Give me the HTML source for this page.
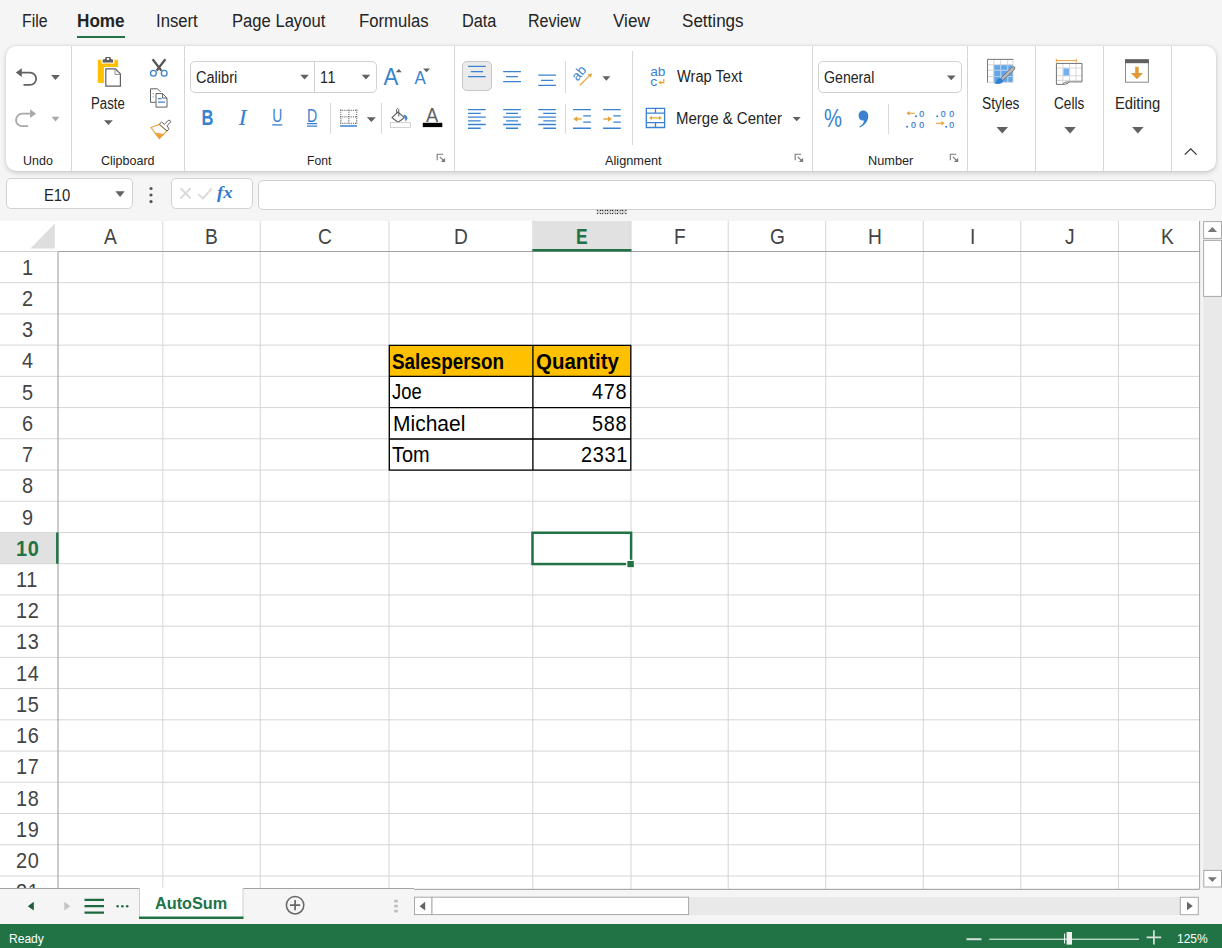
<!DOCTYPE html>
<html><head><meta charset="utf-8"><title>Spreadsheet</title>
<style>
html,body{margin:0;padding:0}
body{width:1222px;height:948px;position:relative;overflow:hidden;background:#f5f5f5;font-family:"Liberation Sans",sans-serif;color:#242424}
.t{position:absolute;white-space:nowrap;line-height:1}
.a{position:absolute}
svg{position:absolute;overflow:visible}
.ribbon{left:6px;top:46px;width:1210px;height:125px;background:#fff;border-radius:10px;box-shadow:0 1.5px 5px rgba(0,0,0,.17),0 0 2px rgba(0,0,0,.09)}
.vd{position:absolute;width:1px;background:#d6d6d6}
.box{position:absolute;background:#fff;border:1px solid #d1d1d1;border-radius:5px;box-sizing:border-box}
</style></head>
<body>
<span class="t" style="left:21.60px;top:12px;font-size:18px;transform:scaleX(0.8793);transform-origin:0 0;">File</span>
<span class="t" style="left:77.40px;top:12px;font-size:18px;transform:scaleX(0.9520);transform-origin:0 0;font-weight:700;">Home</span>
<span class="t" style="left:156.30px;top:12px;font-size:18px;transform:scaleX(0.9267);transform-origin:0 0;">Insert</span>
<span class="t" style="left:231.80px;top:12px;font-size:18px;transform:scaleX(0.9226);transform-origin:0 0;">Page Layout</span>
<span class="t" style="left:358.70px;top:12px;font-size:18px;transform:scaleX(0.9280);transform-origin:0 0;">Formulas</span>
<span class="t" style="left:461.70px;top:12px;font-size:18px;transform:scaleX(0.9049);transform-origin:0 0;">Data</span>
<span class="t" style="left:528.30px;top:12px;font-size:18px;transform:scaleX(0.8913);transform-origin:0 0;">Review</span>
<span class="t" style="left:613.40px;top:12px;font-size:18px;transform:scaleX(0.9518);transform-origin:0 0;">View</span>
<span class="t" style="left:682.30px;top:12px;font-size:18px;transform:scaleX(0.9477);transform-origin:0 0;">Settings</span>
<div class="a" style="left:77px;top:36px;width:48px;height:2px;background:#217346"></div>
<div class="a ribbon"></div>
<div class="vd" style="left:71px;top:46px;height:125px"></div>
<div class="vd" style="left:184px;top:46px;height:125px"></div>
<div class="vd" style="left:454px;top:46px;height:125px"></div>
<div class="vd" style="left:812px;top:46px;height:125px"></div>
<div class="vd" style="left:967px;top:46px;height:125px"></div>
<div class="vd" style="left:1035px;top:46px;height:125px"></div>
<div class="vd" style="left:1103px;top:46px;height:125px"></div>
<div class="vd" style="left:1171px;top:46px;height:125px"></div>
<div class="vd" style="left:330px;top:103px;height:31px;background:#d9d9d9"></div>
<div class="vd" style="left:381px;top:103px;height:31px;background:#d9d9d9"></div>
<div class="vd" style="left:565px;top:61px;height:32px;background:#d9d9d9"></div>
<div class="vd" style="left:565px;top:104px;height:30px;background:#d9d9d9"></div>
<div class="vd" style="left:632px;top:51px;height:94px;background:#d9d9d9"></div>
<div class="vd" style="left:888px;top:104px;height:30px;background:#d9d9d9"></div>
<div class="box" style="left:190px;top:61px;width:187px;height:32px"></div>
<div class="vd" style="left:314px;top:62px;height:30px;background:#d1d1d1"></div>
<div class="box" style="left:818px;top:61px;width:144px;height:32px"></div>
<div class="box" style="left:462px;top:61px;width:30px;height:30px;background:#ebebeb;border-color:#c6c6c6"></div>
<span class="t" style="left:23.40px;top:154px;font-size:13.5px;transform:scaleX(0.9240);transform-origin:0 0;">Undo</span>
<span class="t" style="left:100.70px;top:154px;font-size:13.5px;transform:scaleX(0.9264);transform-origin:0 0;">Clipboard</span>
<span class="t" style="left:307.40px;top:154px;font-size:13.5px;transform:scaleX(0.9000);transform-origin:0 0;">Font</span>
<span class="t" style="left:605.40px;top:154px;font-size:13.5px;transform:scaleX(0.9433);transform-origin:0 0;">Alignment</span>
<span class="t" style="left:867.60px;top:154px;font-size:13.5px;transform:scaleX(0.9437);transform-origin:0 0;">Number</span>
<span class="t" style="left:90.70px;top:96px;font-size:15.6px;transform:scaleX(0.8464);transform-origin:0 0;">Paste</span>
<span class="t" style="left:195.60px;top:70px;font-size:15.6px;transform:scaleX(0.9326);transform-origin:0 0;">Calibri</span>
<span class="t" style="left:320.40px;top:70px;font-size:15.6px;letter-spacing:0.600px;transform:scaleX(0.9200);transform-origin:0 0;">11</span>
<span class="t" style="left:677.00px;top:69px;font-size:15.6px;transform:scaleX(0.9377);transform-origin:0 0;">Wrap Text</span>
<span class="t" style="left:675.80px;top:111px;font-size:15.6px;transform:scaleX(0.9621);transform-origin:0 0;">Merge &amp; Center</span>
<span class="t" style="left:824.20px;top:70px;font-size:15.6px;transform:scaleX(0.9075);transform-origin:0 0;">General</span>
<span class="t" style="left:982.30px;top:96px;font-size:15.6px;transform:scaleX(0.8814);transform-origin:0 0;">Styles</span>
<span class="t" style="left:1054.20px;top:96px;font-size:15.6px;transform:scaleX(0.8733);transform-origin:0 0;">Cells</span>
<span class="t" style="left:1114.50px;top:96px;font-size:15.6px;transform:scaleX(0.9481);transform-origin:0 0;">Editing</span>
<svg width="1222" height="180" viewBox="0 0 1222 180" style="left:0;top:0">
<path d="M21.3 72.6H30A6.15 6.15 0 0 1 30 84.9H23.5" fill="none" stroke="#616161" stroke-width="1.8"/><path d="M15.8 72.6L21.8 68.2V77Z" fill="#616161"/>
<path d="M51.1 75.1H59.9L55.5 80Z" fill="#616161"/>
<path d="M30.6 113.7H22.2A6.2 6.2 0 0 0 22.2 126.1H28.2" fill="none" stroke="#a8a8a8" stroke-width="1.8"/><path d="M36.1 113.7L30.1 109.3V118.1Z" fill="#a8a8a8"/>
<path d="M51.6 116.7H59.4L55.5 121.6Z" fill="#a8a8a8"/>
<path d="M98.6 59.8H117.3Q118.1 59.8 118.1 60.6V66.9H103.9V83H98.6Q97.8 83 97.8 82.2V60.6Q97.8 59.8 98.6 59.8Z" fill="#ffc000"/>
<path d="M101.4 59.6H114.4V62.4Q114.4 63.6 113.2 63.6H102.6Q101.4 63.6 101.4 62.4Z" fill="#fff"/>
<path d="M102.7 62.5V60.6Q102.7 59.3 104 59.3H105.2V58.3Q105.2 57.1 106.4 57.1H109.7Q110.9 57.1 110.9 58.3V59.3H112Q113.1 59.3 113.1 60.6V62.5Z" fill="#5e5e5e"/><rect x="106.9" y="58.1" width="2.2" height="1.8" rx="0.4" fill="#fff"/>
<path d="M105.8 68.8H115.2L120.4 73.9V86.2H105.8Z" fill="#fff" stroke="#5e5e5e" stroke-width="1.2" stroke-linejoin="round"/><path d="M115 69V74.4H120.4" fill="none" stroke="#8a8f8c" stroke-width="1"/>
<path d="M104 120.2H112.8L108.4 125Z" fill="#616161"/>
<path d="M152.6 59.2L161.4 70.6M165.4 59.2L156.6 70.6" stroke="#555" stroke-width="2.3" fill="none"/>
<circle cx="153.4" cy="73.3" r="2.9" fill="none" stroke="#3a82cf" stroke-width="1.3"/><circle cx="164.2" cy="73.3" r="2.9" fill="none" stroke="#3a82cf" stroke-width="1.3"/>
<path d="M155.5 102.3H150.5V88.8H157.5L160.5 91.8" fill="none" stroke="#616161" stroke-width="1"/>
<path d="M156 93.6H162.6L167 98V107.1H156Z" fill="#fff" stroke="#616161" stroke-width="1"/><path d="M162.6 93.6V98H167" fill="none" stroke="#616161" stroke-width="1"/>
<path d="M158 98.6H161.6M158 102.1H165" stroke="#3a82cf" stroke-width="1.1"/><path d="M152.6 93.5h1M152.6 97h1" stroke="#3a82cf" stroke-width="1.1"/>
<path d="M151 127.6L159.2 124.4L167 131L159.3 138.7Z" fill="#fff" stroke="#e8a33a" stroke-width="1.1"/><path d="M154.5 132.5L164 134L159.3 138.7Z" fill="#e8a33a"/>
<path d="M159.4 124.2L161.6 122L164.4 124.4L168.2 120.4Q170.4 119.6 170.8 121.8L167 125.8L169 128.8L167 131Z" fill="#fff" stroke="#616161" stroke-width="1"/>
<path d="M300.3 74.8H308.8L304.55 79.4Z" fill="#616161"/>
<path d="M361.7 74.8H370.2L365.95 79.4Z" fill="#616161"/>
<text x="383.4" y="84.8" font-family="'Liberation Sans',sans-serif" font-size="24" fill="#3a82cf" textLength="14.80" lengthAdjust="spacingAndGlyphs" >A</text>
<path d="M395.8 72.3L398.8 69L401.8 72.3Z" fill="#616161"/>
<text x="414.6" y="83.7" font-family="'Liberation Sans',sans-serif" font-size="18.9" fill="#3a82cf" textLength="11.30" lengthAdjust="spacingAndGlyphs" >A</text>
<path d="M423.1 68.4H430L426.55 72.2Z" fill="#616161"/>
<text x="201.6" y="125" font-family="'Liberation Sans',sans-serif" font-size="22" fill="#3a82cf" font-weight="700" textLength="11.90" lengthAdjust="spacingAndGlyphs" >B</text>
<text x="238.6" y="125" font-family="'Liberation Serif',serif" font-size="22.5" fill="#3a82cf" font-style="italic" textLength="8.20" lengthAdjust="spacingAndGlyphs" >I</text>
<text x="272.2" y="122" font-family="'Liberation Sans',sans-serif" font-size="18" fill="#3a82cf" textLength="10.00" lengthAdjust="spacingAndGlyphs" >U</text>
<path d="M272.2 124.9H282.2" stroke="#3a82cf" stroke-width="1.3"/>
<text x="307" y="122" font-family="'Liberation Sans',sans-serif" font-size="18" fill="#3a82cf" textLength="10.20" lengthAdjust="spacingAndGlyphs" >D</text>
<path d="M307 123.6H317.2M307 126.2H317.2" stroke="#3a82cf" stroke-width="1.2"/>
<path d="M340 110.4H357.4M340 116.9H357.4M340 123.4H357.4M340.8 109.6V124.2M348.8 109.6V124.2M356.7 109.6V124.2" stroke="#777" stroke-width="1.3" stroke-dasharray="1.1 1.05" fill="none"/>
<path d="M340 126H357" stroke="#3a82cf" stroke-width="1.5"/>
<path d="M366.8 117.2H375.9L371.35 121.9Z" fill="#616161"/>
<path d="M392 117.7L397.9 112L404.3 117.7L398.1 122.3Z" fill="#fff" stroke="#616161" stroke-width="1.1" stroke-linejoin="round"/>
<path d="M396.6 113.2V109.6Q397.6 107.2 398.8 109.6V116.6" fill="none" stroke="#616161" stroke-width="1"/>
<path d="M403.2 114.7Q407.4 114.6 407.5 118.6L405.6 121.8Q405.3 117 403.2 114.7Z" fill="#3a82cf"/>
<rect x="390.5" y="122.6" width="20" height="4.9" fill="#fff" stroke="#cfcfcf" stroke-width="0.9"/>
<text x="426" y="122.1" font-family="'Liberation Sans',sans-serif" font-size="20.4" fill="#616161" textLength="12.20" lengthAdjust="spacingAndGlyphs" >A</text>
<rect x="422.8" y="122.8" width="19.5" height="4.3" fill="#000"/>
<path d="M437.2 160.2V154.2H443.2" fill="none" stroke="#7a7a7a" stroke-width="1.1"/><path d="M439.8 156.79999999999998L444.4 161.39999999999998" stroke="#7a7a7a" stroke-width="1.2"/><path d="M445.09999999999997 157.79999999999998V162.1H440.8Z" fill="#7a7a7a"/>
<path d="M795.2 160.2V154.2H801.2" fill="none" stroke="#7a7a7a" stroke-width="1.1"/><path d="M797.8000000000001 156.79999999999998L802.4000000000001 161.39999999999998" stroke="#7a7a7a" stroke-width="1.2"/><path d="M803.1 157.79999999999998V162.1H798.8000000000001Z" fill="#7a7a7a"/>
<path d="M950.3 160.2V154.2H956.3" fill="none" stroke="#7a7a7a" stroke-width="1.1"/><path d="M952.9 156.79999999999998L957.5 161.39999999999998" stroke="#7a7a7a" stroke-width="1.2"/><path d="M958.1999999999999 157.79999999999998V162.1H953.9Z" fill="#7a7a7a"/>
<path d="M468 66.4H485.7M470.8 71.6H482.9M468 76.6H485.7M503.2 71.6H520.9M506.0 76.6H518.1M503.2 81.6H520.9M538.3 75.1H556.0M541.0999999999999 80.3H553.1999999999999M538.3 85.4H556.0M468 109.6H485.7M503.2 109.6H520.9M538.3 109.6H555.9M468 113.35H480.7M506 113.35H518.1M543.3 113.35H555.9M468 117.05H485.7M503.2 117.05H520.9M538.3 117.05H555.9M468 120.8H480.7M506 120.8H518.1M543.3 120.8H555.9M468 124.5H485.7M503.2 124.5H520.9M538.3 124.5H555.9M468 128.2H480.7M506 128.2H518.1M543.3 128.2H555.9M573 109.6H590.9M573 128.2H590.9M583.2 115.8H590.9M583.2 122.1H590.9M603.1 109.6H620.8M603.1 128.2H620.8M613.4 115.8H620.8M613.4 122.1H620.8" stroke="#3a82cf" stroke-width="1.35" fill="none"/>
<path d="M575 119H581.8" stroke="#e8a33a" stroke-width="1.4"/><path d="M573.3 119L577.3 116.2V121.8Z" fill="#e8a33a"/>
<path d="M603.4 119H610" stroke="#e8a33a" stroke-width="1.4"/><path d="M611.9 119L607.9 116.2V121.8Z" fill="#e8a33a"/>
<text x="0" y="0" font-family="'Liberation Sans',sans-serif" font-size="13.4" fill="#3a82cf" transform="translate(577.4 81.8) rotate(-50)">ab</text>
<path d="M579.8 85.2L590.6 74.6" stroke="#e8a33a" stroke-width="1.2"/><path d="M592 73.2L587.6 74.4L590.8 77.6Z" fill="#e8a33a"/>
<path d="M602.4 76.2H610.3L606.3499999999999 80.8Z" fill="#616161"/>
<text x="650.2" y="75.9" font-family="'Liberation Sans',sans-serif" font-size="13.6" fill="#3a82cf" textLength="15.20" lengthAdjust="spacingAndGlyphs" >ab</text>
<text x="650.2" y="85.8" font-family="'Liberation Sans',sans-serif" font-size="13.6" fill="#3a82cf" textLength="7.00" lengthAdjust="spacingAndGlyphs" >c</text>
<path d="M663.8 78.9V82.6H660" fill="none" stroke="#e8a33a" stroke-width="1.2"/><path d="M658.2 82.6L661.2 80.4V84.8Z" fill="#e8a33a"/>
<path d="M646.3 108.4H664.6V127.5H646.3ZM646.3 113.1H664.6M646.3 122.7H664.6M655.5 108.4V113.1M655.5 122.7V127.5" fill="none" stroke="#3a82cf" stroke-width="1.3"/>
<path d="M651 117.9H660" stroke="#e8a33a" stroke-width="1.2"/><path d="M649 117.9L652 115.8V120Z M662 117.9L659 115.8V120Z" fill="#e8a33a"/>
<path d="M792.7 116.9H800.7L796.7 121.3Z" fill="#616161"/>
<path d="M947 75.5H955.5L951.25 80.2Z" fill="#616161"/>
<text x="824" y="127.4" font-family="'Liberation Sans',sans-serif" font-size="25" fill="#3a82cf" textLength="18.00" lengthAdjust="spacingAndGlyphs" >%</text>
<path d="M863.2 110.4C866.2 110.4 868.3 112.6 868.3 116C868.3 121 865 125.4 859.6 127.6L859.2 126.8C862 125.2 863.6 123.2 864 120.4C863.6 120.5 863.2 120.6 862.8 120.6C860.4 120.6 858.6 118.6 858.6 115.6C858.6 112.6 860.6 110.4 863.2 110.4Z" fill="#3a82cf"/>
<circle cx="916" cy="116.3" r="1.05" fill="#3a82cf"/><text x="919.3" y="117.2" font-family="'Liberation Sans',sans-serif" font-size="9.8" fill="#3a82cf" textLength="4.90" lengthAdjust="spacingAndGlyphs" stroke="#3a82cf" stroke-width="0.25">0</text><circle cx="907.1" cy="126.7" r="1.05" fill="#3a82cf"/><text x="910.9" y="127.6" font-family="'Liberation Sans',sans-serif" font-size="9.8" fill="#3a82cf" textLength="4.90" lengthAdjust="spacingAndGlyphs" stroke="#3a82cf" stroke-width="0.25">0</text><text x="919.3" y="127.6" font-family="'Liberation Sans',sans-serif" font-size="9.8" fill="#3a82cf" textLength="4.90" lengthAdjust="spacingAndGlyphs" stroke="#3a82cf" stroke-width="0.25">0</text>
<path d="M908.4 113.3H914.8" stroke="#e8a33a" stroke-width="1.1"/><path d="M906.4 113.3L909.6 111V115.6Z" fill="#e8a33a"/>
<circle cx="937.3" cy="116.3" r="1.05" fill="#3a82cf"/><text x="940.7" y="117.2" font-family="'Liberation Sans',sans-serif" font-size="9.8" fill="#3a82cf" textLength="4.90" lengthAdjust="spacingAndGlyphs" stroke="#3a82cf" stroke-width="0.25">0</text><text x="949.3" y="117.2" font-family="'Liberation Sans',sans-serif" font-size="9.8" fill="#3a82cf" textLength="4.90" lengthAdjust="spacingAndGlyphs" stroke="#3a82cf" stroke-width="0.25">0</text><circle cx="946.2" cy="126.7" r="1.05" fill="#3a82cf"/><text x="949.3" y="127.6" font-family="'Liberation Sans',sans-serif" font-size="9.8" fill="#3a82cf" textLength="4.90" lengthAdjust="spacingAndGlyphs" stroke="#3a82cf" stroke-width="0.25">0</text>
<path d="M936 123.3H942.6" stroke="#e8a33a" stroke-width="1.1"/><path d="M944.6 123.3L941.4 121V125.6Z" fill="#e8a33a"/>
<rect x="993.8" y="64.8" width="19.2" height="17.5" fill="#62a5ea"/>
<path d="M987.5 59.4V82.3M993.8 59.4V82.3M1000.7 59.4V82.3M1007.7 59.4V82.3M1013 59.4V82.3M987.2 59.4H1013.2M987.2 64.8H1013.2M987.2 70.3H1013.2M987.2 76.5H1013.2M987.2 82.3H1013.2" stroke="#d2d2d2" stroke-width="0.9" fill="none"/>
<path d="M1000.7 64.8V82.3M1007.7 64.8V82.3M993.8 70.3H1013M993.8 76.5H1013" stroke="#a9cdf3" stroke-width="0.9" fill="none"/>
<path d="M987.5 82.3V59.4H1013.2" stroke="#7a7a7a" stroke-width="1" fill="none"/>
<path d="M1000.6 78.6L1011.6 67.6Q1014 66 1014.8 67.2Q1015 69 1013.4 70.6L1002.6 80.6Z" fill="#b9b9b9" stroke="#6b6b6b" stroke-width="0.9"/>
<path d="M993.6 83.2Q996.4 82 997.4 79.4Q999.4 77.6 1001.6 78.4Q1003.8 80 1002.8 82Q1000.4 85.2 993.6 83.2Z" fill="#2f7fd3"/>
<path d="M996.5 127H1008L1002.25 133.6Z" fill="#616161"/>
<path d="M1056.6 60.6H1076M1056.3 58.8V62.4M1076.3 58.8V62.4" stroke="#e8a33a" stroke-width="1" fill="none"/>
<rect x="1056.4" y="63.4" width="25.6" height="21" fill="#fff"/>
<path d="M1062.9 63.4V83M1069.5 63.4V83M1076 63.4V84.4M1056.4 68H1082M1056.4 75.8H1082M1056.4 80.4H1082" stroke="#d4d4d4" stroke-width="0.9" fill="none"/>
<rect x="1063.4" y="68.4" width="5.7" height="7.2" fill="#76b1ee"/>
<rect x="1068" y="82.4" width="14.6" height="3" fill="#fff"/><path d="M1056.4 84.4V63.4H1082V81.9H1068.6Q1068.4 84.4 1062.6 84.4Z M1062.6 84.4Q1063.4 82 1068.6 81.9" fill="none" stroke="#707070" stroke-width="1"/>
<path d="M1064.4 127H1075.8L1070.1 133.6Z" fill="#616161"/>
<rect x="1125.5" y="59.8" width="22.9" height="22.4" fill="#fff" stroke="#8a8a8a" stroke-width="1"/>
<rect x="1125" y="59.3" width="23.9" height="3.9" fill="#616161"/>
<path d="M1135.2 66.8H1138.7V73H1143L1136.95 79.3L1130.9 73H1135.2Z" fill="#e29a36"/>
<path d="M1132.1 127H1143.6L1137.85 133.6Z" fill="#616161"/>
<path d="M1184.8 154.6L1190.7 148.9L1196.6 154.6" fill="none" stroke="#333" stroke-width="1.3"/>
</svg>
<div class="box" style="left:6px;top:178px;width:127px;height:31px"></div>
<div class="box" style="left:171px;top:178px;width:82px;height:31px"></div>
<div class="box" style="left:258px;top:180px;width:958px;height:30px"></div>
<span class="t" style="left:44.20px;top:188px;font-size:16.7px;transform:scaleX(0.8867);transform-origin:0 0;">E10</span>
<span class="t" style="left:217.40px;top:185px;font-size:16px;transform:scaleX(1.1664);transform-origin:0 0;font-weight:700;font-style:italic;font-family:'Liberation Serif',serif;color:#2f7dd1;">fx</span>
<svg width="300" height="40" viewBox="0 175 300 40" style="left:0;top:175px">
<path d="M115.4 191.3H124.7L120.05000000000001 196.9Z" fill="#616161"/>
<circle cx="151" cy="188.5" r="1.6" fill="#555"/><circle cx="151" cy="195" r="1.6" fill="#555"/><circle cx="151" cy="201.6" r="1.6" fill="#555"/>
<path d="M180.4 188.2L190.7 198.5M190.7 188.2L180.4 198.5" stroke="#d9d9d9" stroke-width="1.8" fill="none"/>
<path d="M198.2 194.1L203 198.4L211.9 188.4" stroke="#d9d9d9" stroke-width="1.8" fill="none"/>
</svg>
<svg width="40" height="8" viewBox="594 208 40 8" style="left:594px;top:208px"><rect x="597.00" y="210.1" width="4" height="3.8" fill="#c9cbc9"/><circle cx="597.30" cy="210.4" r="0.55" fill="#111"/><circle cx="597.30" cy="213.6" r="0.55" fill="#111"/><circle cx="600.70" cy="210.4" r="0.55" fill="#111"/><circle cx="600.70" cy="213.6" r="0.55" fill="#111"/><rect x="602.05" y="210.1" width="4" height="3.8" fill="#c9cbc9"/><circle cx="602.35" cy="210.4" r="0.55" fill="#111"/><circle cx="602.35" cy="213.6" r="0.55" fill="#111"/><circle cx="605.75" cy="210.4" r="0.55" fill="#111"/><circle cx="605.75" cy="213.6" r="0.55" fill="#111"/><rect x="607.10" y="210.1" width="4" height="3.8" fill="#c9cbc9"/><circle cx="607.40" cy="210.4" r="0.55" fill="#111"/><circle cx="607.40" cy="213.6" r="0.55" fill="#111"/><circle cx="610.80" cy="210.4" r="0.55" fill="#111"/><circle cx="610.80" cy="213.6" r="0.55" fill="#111"/><rect x="612.15" y="210.1" width="4" height="3.8" fill="#c9cbc9"/><circle cx="612.45" cy="210.4" r="0.55" fill="#111"/><circle cx="612.45" cy="213.6" r="0.55" fill="#111"/><circle cx="615.85" cy="210.4" r="0.55" fill="#111"/><circle cx="615.85" cy="213.6" r="0.55" fill="#111"/><rect x="617.20" y="210.1" width="4" height="3.8" fill="#c9cbc9"/><circle cx="617.50" cy="210.4" r="0.55" fill="#111"/><circle cx="617.50" cy="213.6" r="0.55" fill="#111"/><circle cx="620.90" cy="210.4" r="0.55" fill="#111"/><circle cx="620.90" cy="213.6" r="0.55" fill="#111"/><rect x="622.25" y="210.1" width="4" height="3.8" fill="#c9cbc9"/><circle cx="622.55" cy="210.4" r="0.55" fill="#111"/><circle cx="622.55" cy="213.6" r="0.55" fill="#111"/><circle cx="625.95" cy="210.4" r="0.55" fill="#111"/><circle cx="625.95" cy="213.6" r="0.55" fill="#111"/></svg>
<div class="a" style="left:0;top:221px;width:1200px;height:668px;background:#fff"></div>
<svg width="1222" height="668" viewBox="0 221 1222 668" style="left:0;top:221px;overflow:hidden">
<rect x="533.3" y="221" width="97.7" height="29.5" fill="#e1e1e1"/>
<rect x="0" y="532.98" width="56.5" height="30.73" fill="#e1e1e1"/>
<path d="M54.8 223.6V248.4H30.4Z" fill="#dedede"/>
<path d="M0 282.68H1199.5M0 313.90H1199.5M0 345.13H1199.5M0 376.35H1199.5M0 407.58H1199.5M0 438.81H1199.5M0 470.03H1199.5M0 501.26H1199.5M0 532.48H1199.5M0 563.71H1199.5M0 594.94H1199.5M0 626.16H1199.5M0 657.39H1199.5M0 688.61H1199.5M0 719.84H1199.5M0 751.07H1199.5M0 782.29H1199.5M0 813.52H1199.5M0 844.74H1199.5M0 875.97H1199.5M162.8 221V889M260.2 221V889M389 221V889M532.8 221V889M631 221V889M728.2 221V889M825.7 221V889M923.3 221V889M1020.8 221V889M1118.4 221V889" stroke="#d6d6d6" stroke-width="1" fill="none"/>
<path d="M58 251.45H1199.5M58 251.45V889" stroke="#a3a3a3" stroke-width="1.1" fill="none"/>
<path d="M0 251.45H58" stroke="#d0d0d0" stroke-width="1" fill="none"/>
<path d="M1199.6 221V889M0 889.4H1199.6" stroke="#a3a3a3" stroke-width="1" fill="none"/>
<path d="M532.3 250.3H631.5" stroke="#217346" stroke-width="2.5"/>
<path d="M57.3 532.48V563.71" stroke="#217346" stroke-width="2.5"/>
<rect x="389.3" y="345.4" width="241.5" height="30.9" fill="#ffc000"/>
<path d="M388.7 345.4H631.4M388.7 376.4H631.4M388.7 407.6H631.4M388.7 439.0H631.4M388.7 470.2H631.4M389.3 345.4V470.2M532.9 345.4V470.2M630.8 345.4V470.2" stroke="#000" stroke-width="1.3" fill="none"/>
<rect x="532.5" y="532.75" width="98.6" height="31.3" fill="none" stroke="#217346" stroke-width="2.5"/>
<rect x="626.2" y="559.8" width="8.6" height="8.2" fill="#fff"/><rect x="627.4" y="561" width="6.4" height="6.2" fill="#217346"/>
</svg>
<span class="t" style="left:104.21px;top:226px;font-size:21.8px;transform:scaleX(0.8800);transform-origin:0 0;color:#444;">A</span>
<span class="t" style="left:205.31px;top:226px;font-size:21.8px;transform:scaleX(0.8800);transform-origin:0 0;color:#444;">B</span>
<span class="t" style="left:317.85px;top:226px;font-size:21.8px;transform:scaleX(0.8800);transform-origin:0 0;color:#444;">C</span>
<span class="t" style="left:454.15px;top:226px;font-size:21.8px;transform:scaleX(0.8800);transform-origin:0 0;color:#444;">D</span>
<span class="t" style="left:576.29px;top:226px;font-size:21.8px;transform:scaleX(0.8000);transform-origin:0 0;font-weight:700;color:#217346;">E</span>
<span class="t" style="left:673.96px;top:226px;font-size:21.8px;transform:scaleX(0.8800);transform-origin:0 0;color:#444;">F</span>
<span class="t" style="left:769.71px;top:226px;font-size:21.8px;transform:scaleX(0.8800);transform-origin:0 0;color:#444;">G</span>
<span class="t" style="left:867.75px;top:226px;font-size:21.8px;transform:scaleX(0.8800);transform-origin:0 0;color:#444;">H</span>
<span class="t" style="left:969.60px;top:226px;font-size:21.8px;transform:scaleX(0.8800);transform-origin:0 0;color:#444;">I</span>
<span class="t" style="left:1065.00px;top:226px;font-size:21.8px;transform:scaleX(0.8800);transform-origin:0 0;color:#444;">J</span>
<span class="t" style="left:1161.01px;top:226px;font-size:21.8px;transform:scaleX(0.8800);transform-origin:0 0;color:#444;">K</span>
<div class="a" style="left:0;top:221px;width:58px;height:667px;overflow:hidden">
<span class="t" style="left:21.59px;top:36px;font-size:22.1px;letter-spacing:0.750px;transform:scaleX(0.9000);transform-origin:0 0;color:#444;">1</span>
<span class="t" style="left:21.59px;top:67px;font-size:22.1px;letter-spacing:0.750px;transform:scaleX(0.9000);transform-origin:0 0;color:#444;">2</span>
<span class="t" style="left:21.59px;top:98px;font-size:22.1px;letter-spacing:0.750px;transform:scaleX(0.9000);transform-origin:0 0;color:#444;">3</span>
<span class="t" style="left:21.59px;top:129px;font-size:22.1px;letter-spacing:0.750px;transform:scaleX(0.9000);transform-origin:0 0;color:#444;">4</span>
<span class="t" style="left:21.59px;top:161px;font-size:22.1px;letter-spacing:0.750px;transform:scaleX(0.9000);transform-origin:0 0;color:#444;">5</span>
<span class="t" style="left:21.59px;top:192px;font-size:22.1px;letter-spacing:0.750px;transform:scaleX(0.9000);transform-origin:0 0;color:#444;">6</span>
<span class="t" style="left:21.59px;top:223px;font-size:22.1px;letter-spacing:0.750px;transform:scaleX(0.9000);transform-origin:0 0;color:#444;">7</span>
<span class="t" style="left:21.59px;top:254px;font-size:22.1px;letter-spacing:0.750px;transform:scaleX(0.9000);transform-origin:0 0;color:#444;">8</span>
<span class="t" style="left:21.59px;top:286px;font-size:22.1px;letter-spacing:0.750px;transform:scaleX(0.9000);transform-origin:0 0;color:#444;">9</span>
<span class="t" style="left:15.69px;top:317px;font-size:22.1px;letter-spacing:0.750px;transform:scaleX(0.9000);transform-origin:0 0;font-weight:700;color:#217346;">10</span>
<span class="t" style="left:16.42px;top:348px;font-size:22.1px;letter-spacing:0.750px;transform:scaleX(0.9000);transform-origin:0 0;color:#444;">11</span>
<span class="t" style="left:15.69px;top:379px;font-size:22.1px;letter-spacing:0.750px;transform:scaleX(0.9000);transform-origin:0 0;color:#444;">12</span>
<span class="t" style="left:15.69px;top:410px;font-size:22.1px;letter-spacing:0.750px;transform:scaleX(0.9000);transform-origin:0 0;color:#444;">13</span>
<span class="t" style="left:15.69px;top:442px;font-size:22.1px;letter-spacing:0.750px;transform:scaleX(0.9000);transform-origin:0 0;color:#444;">14</span>
<span class="t" style="left:15.69px;top:473px;font-size:22.1px;letter-spacing:0.750px;transform:scaleX(0.9000);transform-origin:0 0;color:#444;">15</span>
<span class="t" style="left:15.69px;top:504px;font-size:22.1px;letter-spacing:0.750px;transform:scaleX(0.9000);transform-origin:0 0;color:#444;">16</span>
<span class="t" style="left:15.69px;top:535px;font-size:22.1px;letter-spacing:0.750px;transform:scaleX(0.9000);transform-origin:0 0;color:#444;">17</span>
<span class="t" style="left:15.69px;top:567px;font-size:22.1px;letter-spacing:0.750px;transform:scaleX(0.9000);transform-origin:0 0;color:#444;">18</span>
<span class="t" style="left:15.69px;top:598px;font-size:22.1px;letter-spacing:0.750px;transform:scaleX(0.9000);transform-origin:0 0;color:#444;">19</span>
<span class="t" style="left:15.69px;top:629px;font-size:22.1px;letter-spacing:0.750px;transform:scaleX(0.9000);transform-origin:0 0;color:#444;">20</span>
<span class="t" style="left:15.69px;top:660px;font-size:22.1px;letter-spacing:0.750px;transform:scaleX(0.9000);transform-origin:0 0;color:#444;">21</span>
</div>
<span class="t" style="left:392.20px;top:351px;font-size:21.7px;transform:scaleX(0.8677);transform-origin:0 0;font-weight:700;color:#000;">Salesperson</span>
<span class="t" style="left:535.60px;top:351px;font-size:21.7px;transform:scaleX(0.9427);transform-origin:0 0;font-weight:700;color:#000;">Quantity</span>
<span class="t" style="left:391.60px;top:381px;font-size:21.7px;transform:scaleX(0.8475);transform-origin:0 0;color:#000;">Joe</span>
<span class="t" style="left:392.60px;top:413px;font-size:21.7px;transform:scaleX(0.9676);transform-origin:0 0;color:#000;">Michael</span>
<span class="t" style="left:392.00px;top:444px;font-size:21.7px;transform:scaleX(0.9188);transform-origin:0 0;color:#000;">Tom</span>
<span class="t" style="left:592.30px;top:381px;font-size:22.1px;letter-spacing:0.750px;transform:scaleX(0.9000);transform-origin:0 0;color:#000;">478</span>
<span class="t" style="left:592.30px;top:413px;font-size:22.1px;letter-spacing:0.750px;transform:scaleX(0.9000);transform-origin:0 0;color:#000;">588</span>
<span class="t" style="left:580.50px;top:444px;font-size:22.1px;letter-spacing:0.750px;transform:scaleX(0.9000);transform-origin:0 0;color:#000;">2331</span>
<svg width="1222" height="60" viewBox="0 888 1222 60" style="left:0;top:888px">
<rect x="0" y="889" width="1222" height="36" fill="#f5f5f5"/>
<path d="M0 888.5H139.5M243 888.5H414M414 889.4H1199.6" stroke="#a3a3a3" stroke-width="1" fill="none"/>
<rect x="139.5" y="888" width="103.5" height="30" fill="#fff"/>
<path d="M139.5 888V917M243 888V917" stroke="#cfcfcf" stroke-width="1" fill="none"/>
<path d="M139 917.8H243.5" stroke="#217346" stroke-width="2.6"/>
<path d="M27.8 906.2L33.8 901.8V910.6Z" fill="#1e5c3a"/>
<path d="M70.3 906.2L64.3 901.8V910.6Z" fill="#c4c4c4"/>
<path d="M84.5 899.8H104M84.5 906.1H104M84.5 912.6H104" stroke="#1e6b41" stroke-width="2.2"/>
<circle cx="117.6" cy="906.3" r="1.25" fill="#1e6b41"/><circle cx="122.4" cy="906.3" r="1.25" fill="#1e6b41"/><circle cx="127.2" cy="906.3" r="1.25" fill="#1e6b41"/>
<circle cx="295.1" cy="905.2" r="8.7" fill="none" stroke="#666" stroke-width="1.5"/><path d="M290 905.2H300.2M295.1 900.1V910.3" stroke="#666" stroke-width="1.7"/>
<rect x="394.2" y="899.8" width="3.6" height="2.6" fill="#bdbdbd"/><rect x="394.2" y="904.8" width="3.6" height="2.6" fill="#bdbdbd"/><rect x="394.2" y="909.8" width="3.6" height="2.6" fill="#bdbdbd"/>
<rect x="414" y="897" width="785" height="18" fill="#e9e9e9"/>
<rect x="414.5" y="897.2" width="17.5" height="17.4" fill="#fff" stroke="#a9a9a9" stroke-width="1"/>
<path d="M419.6 906.2L425.2 901.8V910.6Z" fill="#666"/>
<rect x="432" y="897.2" width="256.6" height="17.4" fill="#fff" stroke="#a9a9a9" stroke-width="1"/>
<rect x="1180.3" y="897.3" width="18" height="17.4" fill="#fff" stroke="#a9a9a9" stroke-width="1"/>
<path d="M1192.8 906L1187 901.8V910.3Z" fill="#666"/>
<rect x="0" y="924" width="1222" height="25" fill="#217346"/>
<path d="M966.5 939.2H981.5" stroke="#d5e3db" stroke-width="2"/>
<path d="M989.2 939.2H1139" stroke="#fff" stroke-width="1"/>
<path d="M1064.6 933.5V943.5" stroke="#fff" stroke-width="1"/>
<rect x="1066.6" y="932" width="5.4" height="12.6" fill="#f0f0f0"/>
<path d="M1146.6 937.4H1161.2M1153.9 930.3V944.6" stroke="#d5e3db" stroke-width="1.7"/>
</svg>
<span class="t" style="left:155.30px;top:896px;font-size:16.9px;transform:scaleX(0.9626);transform-origin:0 0;font-weight:700;color:#217346;">AutoSum</span>
<span class="t" style="left:8.90px;top:932px;font-size:13.5px;transform:scaleX(0.8923);transform-origin:0 0;color:#fff;">Ready</span>
<span class="t" style="left:1177.00px;top:932px;font-size:13.5px;transform:scaleX(0.8899);transform-origin:0 0;color:#fff;">125%</span>
<svg width="22" height="672" viewBox="1200 219 22 672" style="left:1200px;top:219px">
<rect x="1203.3" y="221" width="18.7" height="666.5" fill="#e9e9e9"/>
<rect x="1203.6" y="221.6" width="17.9" height="16.8" fill="#fff" stroke="#a9a9a9" stroke-width="1"/>
<path d="M1207.6 232L1212.35 226.9L1217.1 232Z" fill="#777"/>
<rect x="1203.6" y="240.4" width="17.9" height="56" fill="#fff" stroke="#a9a9a9" stroke-width="1"/>
<rect x="1203.8" y="870.4" width="17.7" height="16.6" fill="#fff" stroke="#a9a9a9" stroke-width="1"/>
<path d="M1207.8 877.2H1216.9L1212.35 881.9Z" fill="#777"/>
</svg>
</body></html>
